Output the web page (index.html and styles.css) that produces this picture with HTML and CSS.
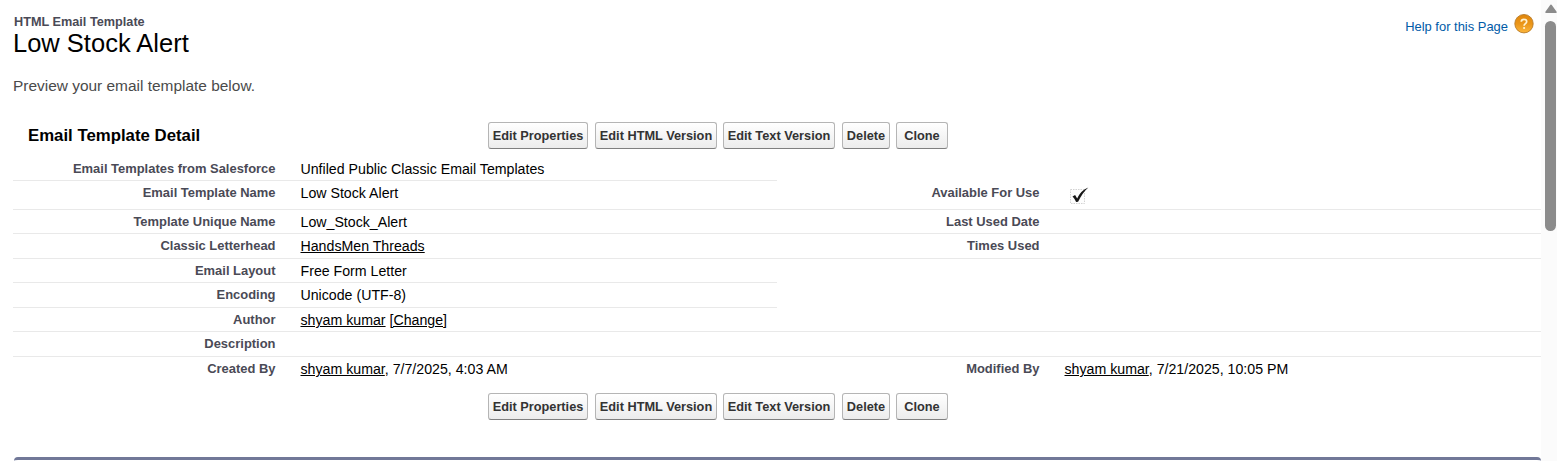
FILE: index.html
```html
<!DOCTYPE html>
<html lang="en">
<head>
<meta charset="utf-8">
<title>Low Stock Alert</title>
<link rel="stylesheet" href="styles.css">
</head>
<body>
<div class="page">
<main class="content">
  <header class="page-header">
    <div class="titles">
      <div class="page-type">HTML Email Template</div>
      <h1 class="page-title">Low Stock Alert</h1>
    </div>
    <div class="help">
      <a class="help-link">Help for this Page</a>
      <svg class="help-icon" width="20" height="20" viewBox="0 0 20 20">
        <defs><linearGradient id="orange" x1="0" y1="0" x2="0" y2="1"><stop offset="0" stop-color="#e0860c"/><stop offset=".5" stop-color="#ea9518"/><stop offset="1" stop-color="#fcb63c"/></linearGradient></defs>
        <circle cx="10" cy="9.700" r="9.2" fill="url(#orange)" stroke="#b87a28" stroke-width=".9"/>
        <path d="M7.300 7.800C7.300 6.200 8.400 5.400 10 5.400s2.700.9 2.700 2.300c0 1.900-2.600 2-2.600 4" fill="none" stroke="#fff2d0" stroke-width="1.7"/>
        <circle cx="10.1" cy="14" r="1.1" fill="#fff2d0"/>
      </svg>
    </div>
  </header>
  <p class="intro">Preview your email template below.</p>
  <section class="detail">
    <div class="toolbar">
      <h2 class="detail-title">Email Template Detail</h2>
      <div class="buttons">
        <button class="btn b1">Edit Properties</button><button class="btn b2">Edit HTML Version</button><button class="btn b3">Edit Text Version</button><button class="btn b4">Delete</button><button class="btn b5">Clone</button>
      </div>
    </div>
    <div class="row r24 half"><div class="label">Email Templates from Salesforce</div><div class="value">Unfiled Public Classic Email Templates</div></div>
    <div class="row r29"><div class="label">Email Template Name</div><div class="value">Low Stock Alert</div><div class="label">Available For Use</div><div class="value check">
      <svg width="26" height="22" viewBox="0 0 26 22"><rect x="5.5" y="4.5" width="14" height="14" fill="#fdfdfd" stroke="#d2d2d2" stroke-dasharray="1.5 1"/><path d="M7.500 11.400l2.600-1.300 2.100 3.400C14.500 8.700 17.500 4.900 23.300 2.500 19 6.200 16.200 10.700 13.100 16.800l-2 .2C10.100 14.700 9.100 12.800 7.500 11.400z" fill="#161616"/></svg>
    </div></div>
    <div class="row r24"><div class="label">Template Unique Name</div><div class="value">Low_Stock_Alert</div><div class="label">Last Used Date</div><div class="value"></div></div>
    <div class="row r25"><div class="label">Classic Letterhead</div><div class="value"><a>HandsMen Threads</a></div><div class="label">Times Used</div><div class="value"></div></div>
    <div class="row r24 half"><div class="label">Email Layout</div><div class="value">Free Form Letter</div></div>
    <div class="row r25 half"><div class="label">Encoding</div><div class="value">Unicode (UTF-8)</div></div>
    <div class="row r24"><div class="label">Author</div><div class="value"><a>shyam kumar</a> <a>[Change]</a></div></div>
    <div class="row r25"><div class="label">Description</div><div class="value"></div></div>
    <div class="row last"><div class="label">Created By</div><div class="value"><a>shyam kumar</a>, 7/7/2025, 4:03 AM</div><div class="label">Modified By</div><div class="value"><a>shyam kumar</a>, 7/21/2025, 10:05 PM</div></div>
    <div class="buttons bottom">
      <button class="btn b1">Edit Properties</button><button class="btn b2">Edit HTML Version</button><button class="btn b3">Edit Text Version</button><button class="btn b4">Delete</button><button class="btn b5">Clone</button>
    </div>
  </section>
  <div class="next-block"></div>
</main>
<aside class="scrollbar">
  <svg class="arrow" width="12" height="9" viewBox="0 0 12 9"><path d="M6 1.300L11 8.200H1z" fill="#8b8b8b" stroke="#8b8b8b" stroke-width="1.500" stroke-linejoin="round"/></svg>
  <div class="thumb"></div>
</aside>
</div>
</body>
</html>
```

FILE: styles.css
```css
* { box-sizing: border-box; }
body { margin: 0; background: #fff; color: #000; font-family: "Liberation Sans", Arial, sans-serif; overflow: hidden; }
.page { display: flex; height: 461px; overflow: hidden; }
.content { width: 1541px; padding-left: 13px; display: flex; flex-direction: column; }
.content > * { flex-shrink: 0; }
.page-header { display: flex; justify-content: space-between; height: 60px; padding-top: 14px; }
.page-type { font-size: 12.700px; line-height: 14px; font-weight: bold; color: #4a4a56; padding: 1px 0 0 1px; }
.page-title { margin: 0; font-size: 25.500px; line-height: 28px; font-weight: normal; }
.help { display: flex; align-items: flex-start; gap: 6px; padding-right: 7px; }
.help-link { color: #015ba7; font-size: 12.950px; line-height: 16px; padding-top: 5px; }
.intro { margin: 17px 0 0; height: 45px; font-size: 15.450px; line-height: 18px; color: #4a4a4a; }
.toolbar { display: flex; height: 35px; }
.detail-title { margin: 4px 0 0; width: 475px; padding-left: 15px; font-size: 16.800px; line-height: 19px; }
.buttons { display: flex; }
.btn { height: 27px; padding: 0; border: 1px solid #b5b5b5; border-bottom-color: #7f7f7f; border-radius: 3px; background: linear-gradient(#fff, #ececec); color: #333; font: bold 12.750px/15px "Liberation Sans", Arial, sans-serif; white-space: nowrap; }
.b1 { width: 100px; margin-right: 7px; }
.b2 { width: 122px; margin-right: 6px; }
.b3 { width: 112px; margin-right: 7px; }
.b4 { width: 48px; margin-right: 6px; }
.b5 { width: 52px; }
.bottom { padding-left: 475px; margin-top: 12px; }
.row { display: grid; grid-template-columns: 263px 501px 263px 501px; border-bottom: 1px solid #e9e9e9; padding-top: 4px; }
.half { width: 764px; grid-template-columns: 263px 501px; }
.r24 { height: 24px; }
.r25 { height: 25px; }
.r29 { height: 29px; }
.last { height: 24px; border-bottom: 0; }
.label { font-size: 12.950px; line-height: 16px; font-weight: bold; color: #4a4a56; text-align: right; padding-right: 0.5px; }
.value { font-size: 14.180px; line-height: 17px; padding-left: 24.500px; }
.value a { text-decoration: underline; }
.check { padding-left: 25px; }
.check svg { display: block; }
.next-block { margin: 37px 0 0 1px; height: 10px; border-top: 3px solid #717898; border-radius: 4px 4px 0 0; }
.scrollbar { width: 16px; background: #fbfbfb; display: flex; flex-direction: column; padding: 4px 0 0 4px; }
.arrow { display: block; }
.thumb { width: 11px; height: 210px; margin-top: 8px; border-radius: 6px; background: #8b8b8b; }
```
